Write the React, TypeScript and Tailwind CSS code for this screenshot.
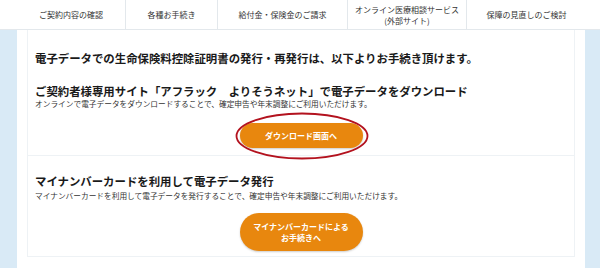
import React from 'react'

const navItems = [
  { label: 'ご契約内容の確認', width: 'w-[108px]' },
  { label: '各種お手続き', width: 'w-[92px]' },
  { label: '給付金・保険金のご請求', width: 'w-[130px]' },
  { label: 'オンライン医療相談サービス\n(外部サイト)', width: 'w-[119px]' },
  { label: '保障の見直しのご検討', width: 'w-[120px]' },
]

function NavBar() {
  return (
    <nav className="flex h-[30px] border-b border-[#e3e8ec] bg-white pl-[17px]">
      {navItems.map((item, i) => (
        <div
          key={item.label}
          className={`${item.width} flex items-center justify-center whitespace-pre-line text-center text-[8px] leading-[11px] text-[#333] ${
            i > 0 ? 'border-l border-[#e3e8ec]' : ''
          }`}
        >
          {item.label}
        </div>
      ))}
    </nav>
  )
}

function OrangeButton({ children, tall }: { children: React.ReactNode; tall?: boolean }) {
  return (
    <div
      className={`mx-auto flex w-[123px] items-center justify-center rounded-full bg-[#e8870e] text-center text-[8px] font-bold leading-[11px] text-white shadow-[0_1px_2px_rgba(0,0,0,0.2)] ${
        tall ? 'h-[38px]' : 'h-[25px]'
      }`}
    >
      {children}
    </div>
  )
}

export default function App() {
  return (
    <div
      className="h-[268px] w-[600px] overflow-hidden bg-white text-[#1a1a1a]"
      style={{ fontFamily: '"Noto Sans CJK JP", "Noto Sans", sans-serif' }}
    >
      <NavBar />
      <div className="flex h-[238px]">
        <aside className="w-[17px] shrink-0 bg-[#d9eaf6]" />
        <main className="flex-1 bg-white px-[10px]">
          {/* 生命保険料控除証明書 */}
          <section className="relative border-x border-b border-[#eef2f5] px-[7px] pb-[7px] pt-[20px]">
            <p className="text-[11.4px] font-bold leading-[16px]">
              電子データでの生命保険料控除証明書の発行・再発行は、以下よりお手続き頂けます。
            </p>
            <h2 className="mt-[18px] text-[11.4px] font-bold leading-[14px]">
              ご契約者様専用サイト「アフラック　よりそうネット」で電子データをダウンロード
            </h2>
            <p className="mt-[1px] text-[7.7px] leading-[10px] text-[#333]">
              オンラインで電子データをダウンロードすることで、確定申告や年末調整にご利用いただけます。
            </p>
            <div className="relative mt-[14px]">
              <OrangeButton>ダウンロード画面へ</OrangeButton>
              {/* 赤丸の強調 */}
              <svg
                className="pointer-events-none absolute left-[200px] top-[-11px]"
                width="134"
                height="48"
                viewBox="0 0 134 48"
                aria-hidden="true"
              >
                <ellipse cx="67" cy="24" rx="65.5" ry="22.5" fill="none" stroke="#b3121e" strokeWidth="1.8" />
              </svg>
            </div>
          </section>

          {/* マイナンバーカード */}
          <section className="border-x border-b border-[#eef2f5] px-[7px] pb-[5px] pt-[18px]">
            <h2 className="text-[11.4px] font-bold leading-[14px]">
              マイナンバーカードを利用して電子データ発行
            </h2>
            <p className="mt-[3px] text-[7.7px] leading-[10px] text-[#333]">
              マイナンバーカードを利用して電子データを発行することで、確定申告や年末調整にご利用いただけます。
            </p>
            <div className="mt-[12px]">
              <OrangeButton tall>
                マイナンバーカードによる
                <br />
                お手続きへ
              </OrangeButton>
            </div>
          </section>
        </main>
        <aside className="w-[15px] shrink-0 bg-[#d9eaf6]" />
      </div>
    </div>
  )
}
